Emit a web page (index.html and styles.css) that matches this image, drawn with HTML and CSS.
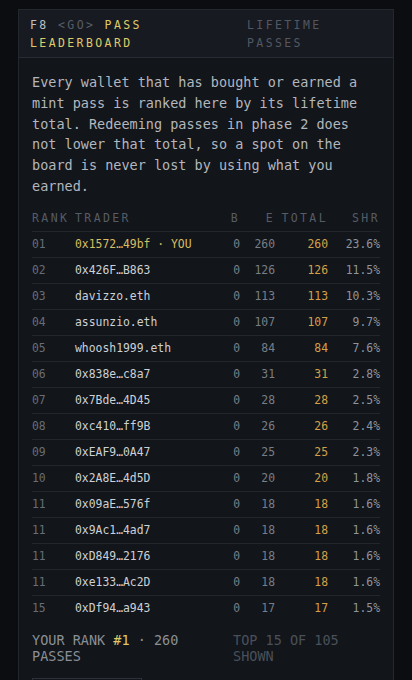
FILE: index.html
```html
<!DOCTYPE html>
<html lang="en">
<head>
<meta charset="utf-8">
<title>F8 Pass Leaderboard</title>
<link rel="stylesheet" href="styles.css">
</head>
<body>
<div class="card">
  <div class="card-head">
    <div class="title"><span class="fkey">F8</span> <span class="go">&lt;GO&gt;</span> <span class="hl">PASS LEADERBOARD</span></div>
    <div class="meta">LIFETIME PASSES</div>
  </div>
  <div class="card-body">
    <p class="intro">Every wallet that has bought or earned a mint pass is ranked here by its lifetime total. Redeeming passes in phase 2 does not lower that total, so a spot on the board is never lost by using what you earned.</p>
    <div class="table">
      <div class="row head"><span>RANK</span><span>TRADER</span><span class="num">B</span><span class="num">E</span><span class="num">TOTAL</span><span class="num">SHR</span></div>
      <div class="row you"><span class="rank">01</span><span class="name">0x1572…49bf · YOU</span><span class="num be">0</span><span class="num be">260</span><span class="num tot">260</span><span class="num shr">23.6%</span></div>
      <div class="row"><span class="rank">02</span><span class="name">0x426F…B863</span><span class="num be">0</span><span class="num be">126</span><span class="num tot">126</span><span class="num shr">11.5%</span></div>
      <div class="row"><span class="rank">03</span><span class="name">davizzo.eth</span><span class="num be">0</span><span class="num be">113</span><span class="num tot">113</span><span class="num shr">10.3%</span></div>
      <div class="row"><span class="rank">04</span><span class="name">assunzio.eth</span><span class="num be">0</span><span class="num be">107</span><span class="num tot">107</span><span class="num shr">9.7%</span></div>
      <div class="row"><span class="rank">05</span><span class="name">whoosh1999.eth</span><span class="num be">0</span><span class="num be">84</span><span class="num tot">84</span><span class="num shr">7.6%</span></div>
      <div class="row"><span class="rank">06</span><span class="name">0x838e…c8a7</span><span class="num be">0</span><span class="num be">31</span><span class="num tot">31</span><span class="num shr">2.8%</span></div>
      <div class="row"><span class="rank">07</span><span class="name">0x7Bde…4D45</span><span class="num be">0</span><span class="num be">28</span><span class="num tot">28</span><span class="num shr">2.5%</span></div>
      <div class="row"><span class="rank">08</span><span class="name">0xc410…ff9B</span><span class="num be">0</span><span class="num be">26</span><span class="num tot">26</span><span class="num shr">2.4%</span></div>
      <div class="row"><span class="rank">09</span><span class="name">0xEAF9…0A47</span><span class="num be">0</span><span class="num be">25</span><span class="num tot">25</span><span class="num shr">2.3%</span></div>
      <div class="row"><span class="rank">10</span><span class="name">0x2A8E…4d5D</span><span class="num be">0</span><span class="num be">20</span><span class="num tot">20</span><span class="num shr">1.8%</span></div>
      <div class="row"><span class="rank">11</span><span class="name">0x09aE…576f</span><span class="num be">0</span><span class="num be">18</span><span class="num tot">18</span><span class="num shr">1.6%</span></div>
      <div class="row"><span class="rank">11</span><span class="name">0x9Ac1…4ad7</span><span class="num be">0</span><span class="num be">18</span><span class="num tot">18</span><span class="num shr">1.6%</span></div>
      <div class="row"><span class="rank">11</span><span class="name">0xD849…2176</span><span class="num be">0</span><span class="num be">18</span><span class="num tot">18</span><span class="num shr">1.6%</span></div>
      <div class="row"><span class="rank">11</span><span class="name">0xe133…Ac2D</span><span class="num be">0</span><span class="num be">18</span><span class="num tot">18</span><span class="num shr">1.6%</span></div>
      <div class="row"><span class="rank">15</span><span class="name">0xDf94…a943</span><span class="num be">0</span><span class="num be">17</span><span class="num tot">17</span><span class="num shr">1.5%</span></div>
    </div>
    <div class="summary">
      <div class="mine">YOUR RANK <span class="hl">#1</span> · 260 PASSES</div>
      <div class="shown">TOP 15 OF 105 SHOWN</div>
    </div>
    <div class="more"></div>
  </div>
</div>
</body>
</html>
```

FILE: styles.css
```css
* { box-sizing: border-box; }

html, body {
  margin: 0;
  padding: 0;
  background: #0b0d10;
}

body {
  font-family: "DejaVu Sans Mono", "Liberation Mono", monospace;
  color: #b8bcc3;
  padding: 9px 18px 20px;
}

.card {
  background: #121519;
  border: 1px solid #23272e;
}

.card-head {
  display: grid;
  grid-template-columns: 1fr 135px;
  padding: 6px 11px 5px;
  background: #171a20;
  border-bottom: 1px solid #272b33;
  font-size: 11.5px;
  letter-spacing: 2.4px;
  line-height: 18px;
}

.title .fkey { color: #bcc0c6; }
.title .go { color: #575d67; }
.title .hl { color: #dfca6a; }

.meta { color: #525862; }

.card-body {
  padding: 14px 13px 0;
}

.intro {
  margin: 0 10px 0 0;
  font-size: 13.5px;
  line-height: 20.8px;
  color: #b3b7be;
}

.table {
  margin-top: 9px;
}

.row {
  display: grid;
  grid-template-columns: 43px 1fr 20px 35px 53px 52px;
  height: 26px;
  line-height: 25px;
  border-bottom: 1px solid #22262d;
  font-size: 11.4px;
  white-space: nowrap;
}

.row:last-child { border-bottom: none; }

.row.head {
  font-size: 11.5px;
  letter-spacing: 2.4px;
  color: #565c66;
}

.num { text-align: right; }

.rank { color: #676d77; }
.name { color: #cdd0d5; }
.you .name { color: #d6be64; }
.be { color: #787e87; }
.tot { color: #d4a149; }
.shr { color: #8e949d; }

.summary {
  display: grid;
  grid-template-columns: 190px 1fr;
  column-gap: 11px;
  margin-top: 10px;
  font-size: 13.5px;
  line-height: 16px;
}

.mine { color: #898f97; }
.mine .hl { color: #dec966; }
.shown { color: #4a5059; }

.more {
  width: 110px;
  height: 30px;
  margin-top: 14px;
  border: 1px solid #2c3139;
}
```
